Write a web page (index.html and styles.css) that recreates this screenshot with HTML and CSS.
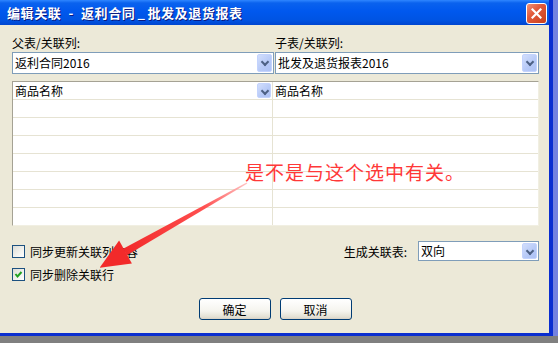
FILE: index.html
```html
<!DOCTYPE html>
<html lang="zh-CN">
<head>
  <meta charset="UTF-8" />
  <title>编辑关联</title>
  <link rel="stylesheet" href="styles.css">
</head>
<body>
  <div class="screen">
    <div class="window">
      <div class="titlebar">
        <span class="title">编辑关联  -  返利合同<span class="under">_</span>批发及退货报表</span>
        <span class="close">
          <svg width="11" height="11" viewBox="0 0 11 11"><path d="M1.5 1.5 L9.5 9.5 M9.5 1.5 L1.5 9.5" stroke="#fff" stroke-width="2.2" stroke-linecap="square"/></svg>
        </span>
      </div>

      <div class="dialog">
        <div class="pickers">
          <div class="field">
            <div class="label">父表/关联列:</div>
            <div class="combo"><span class="value">返利合同2016</span><span class="drop"></span></div>
          </div>
          <div class="field">
            <div class="label">子表/关联列:</div>
            <div class="combo"><span class="value">批发及退货报表2016</span><span class="drop"></span></div>
          </div>
        </div>

        <div class="grid">
          <div class="row head">
            <div class="cell"><span class="value">商品名称</span><span class="drop"></span></div>
            <div class="cell"><span class="value">商品名称</span></div>
          </div>
          <div class="row"><div class="cell"></div><div class="cell"></div></div>
          <div class="row"><div class="cell"></div><div class="cell"></div></div>
          <div class="row"><div class="cell"></div><div class="cell"></div></div>
          <div class="row"><div class="cell"></div><div class="cell"></div></div>
          <div class="row"><div class="cell"></div><div class="cell"></div></div>
          <div class="row"><div class="cell"></div><div class="cell"></div></div>
          <div class="row"><div class="cell"></div><div class="cell"></div></div>
        </div>

        <div class="options">
          <div class="checks">
            <label class="check"><span class="box"></span>同步更新关联列内容</label>
            <label class="check"><span class="box">
              <svg width="11" height="11" viewBox="0 0 11 11"><path d="M2.5 5 L4.5 7.5 L8.5 3" fill="none" stroke="#21a121" stroke-width="2"/></svg>
            </span>同步删除关联行</label>
          </div>
          <div class="generate">
            <span>生成关联表:</span>
            <div class="combo small"><span class="value">双向</span><span class="drop"></span></div>
          </div>
        </div>

        <div class="buttons">
          <button>确定</button>
          <button>取消</button>
        </div>
      </div>
    </div>
    <div class="edge"></div>

    <!-- red annotation drawn over the screenshot -->
    <div class="note">是不是与这个选中有关。</div>
    <svg class="arrow" width="558" height="343" viewBox="0 0 558 343">
      <defs>
        <linearGradient id="fade" x1="247" y1="183" x2="125" y2="252" gradientUnits="userSpaceOnUse">
          <stop offset="0" stop-color="#ffc4c4"/>
          <stop offset="0.35" stop-color="#ff5050"/>
          <stop offset="1" stop-color="#f22a2a"/>
        </linearGradient>
      </defs>
      <polygon points="246.6,182.4 247.4,183.6 126.9,255.2 123.1,248.8" fill="url(#fade)"/>
      <polygon points="99.6,267.8 131.9,263.5 119.1,240.5" fill="#f22a2a"/>
    </svg>
  </div>
</body>
</html>
```

FILE: styles.css
```css
* {
  box-sizing: border-box;
}
body {
  margin: 0;
  background: #808080;
  font-family: "Noto Sans CJK SC", "DejaVu Sans", sans-serif;
  font-size: 12px;
  color: #000;
}
.screen {
  position: relative;
  width: 558px;
  height: 343px;
  overflow: hidden;
  display: flex;
  align-items: flex-start;
}
.window {
  width: 553px;
  height: 336px;
  background: #ece9d8;
  border-right: 4px solid #0a2ed0;
  border-bottom: 3px solid #0a2ed0;
  display: flex;
  flex-direction: column;
}
.edge {
  width: 5px;
  height: 336px;
  background: #7482e0;
}
.titlebar {
  height: 25px;
  background: linear-gradient(#2f86ff 0, #0a62ee 3px, #0058ee 45%, #0054e3 80%, #0046d0 100%);
  display: flex;
  align-items: center;
  justify-content: space-between;
  padding: 0 2px 0 7px;
}
.title {
  color: #fff;
  font-weight: bold;
  font-size: 13px;
  letter-spacing: 0.6px;
  white-space: pre;
  text-shadow: 1px 1px 0 #0a1a80;
}
.under {
  padding: 0 2px;
}
.close {
  width: 21px;
  height: 21px;
  margin-top: 1px;
  border: 1px solid #fff;
  border-radius: 3px;
  background: linear-gradient(135deg, #f0937a 0, #e25a3b 40%, #c8401c 100%);
  display: flex;
  align-items: center;
  justify-content: center;
}
.dialog {
  flex: 1;
  padding: 11px 10px 0 12px;
  display: flex;
  flex-direction: column;
}
.pickers {
  display: grid;
  grid-template-columns: 262px 1fr;
  gap: 1px;
}
.label {
  height: 14px;
  line-height: 14px;
  margin-bottom: 2px;
}
.combo {
  height: 22px;
  background: #fff;
  border: 1px solid #7f9db9;
  display: flex;
  align-items: center;
  justify-content: space-between;
  padding: 0 1px 0 2px;
}
.combo .drop {
  height: 18px;
}
.value {
  line-height: 14px;
}
.drop {
  width: 15px;
  height: 16px;
  border-radius: 2px;
  border: 1px solid #c3d3fd;
  background: linear-gradient(135deg, #d2defc 0, #b6c9f7 60%, #aec2f5 100%);
  position: relative;
}
.drop::after {
  content: "";
  position: absolute;
  left: 4px;
  top: 4px;
  width: 4px;
  height: 4px;
  border-right: 2px solid #4d6185;
  border-bottom: 2px solid #4d6185;
  transform: rotate(45deg);
}
.grid {
  margin-top: 7px;
  background: #fff;
  border-top: 1px solid #a5a294;
  border-left: 1px solid #a5a294;
  border-right: 1px solid #f1efe2;
  border-bottom: 1px solid #f1efe2;
}
.row {
  display: grid;
  grid-template-columns: 260px 1fr;
  height: 18px;
  border-bottom: 1px solid #e6e3d3;
}
.row:last-child {
  height: 17px;
  border-bottom: none;
}
.cell {
  border-right: 1px solid #e6e3d3;
  display: flex;
  align-items: center;
  justify-content: space-between;
  padding: 0 1px 0 2px;
}
.cell:last-child {
  border-right: none;
}
.head .drop {
  height: 15px;
  width: 14px;
}
.options {
  margin-top: 15px;
  display: flex;
  justify-content: space-between;
  align-items: flex-start;
}
.checks {
  padding-top: 4px;
  display: flex;
  flex-direction: column;
  gap: 10px;
}
.check {
  display: flex;
  align-items: center;
  gap: 5px;
  height: 13px;
  line-height: 13px;
}
.box {
  width: 13px;
  height: 13px;
  border: 1px solid #1c5180;
  background: linear-gradient(135deg, #dcdcd5 0, #f3f3ef 60%, #fff 100%);
  display: flex;
  align-items: center;
  justify-content: center;
}
.generate {
  display: flex;
  align-items: center;
  gap: 11px;
}
.combo.small {
  width: 121px;
  height: 20px;
}
.combo.small .drop {
  height: 16px;
}
.buttons {
  margin-top: 17px;
  display: flex;
  justify-content: center;
  gap: 9px;
  padding-right: 1px;
}
button {
  width: 72px;
  height: 22px;
  font-family: inherit;
  font-size: 12px;
  border: 1px solid #003c74;
  border-radius: 3px;
  background: linear-gradient(#ffffff 0, #f5f4ee 60%, #e3e0d3 90%, #d6d0c5 100%);
  padding: 0;
}
.note {
  position: absolute;
  left: 245px;
  top: 162px;
  color: #ff3838;
  font-size: 19px;
  line-height: 20px;
  letter-spacing: 1px;
}
.arrow {
  position: absolute;
  left: 0;
  top: 0;
  pointer-events: none;
}
```
